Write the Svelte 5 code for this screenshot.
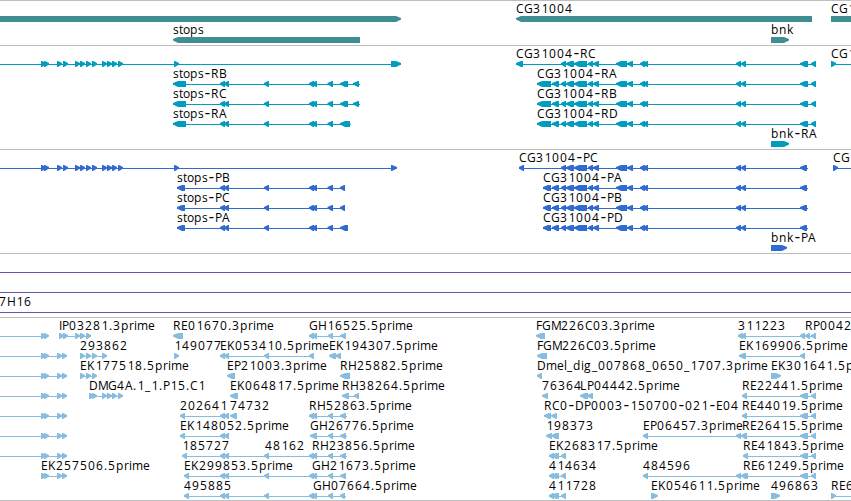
<script lang="ts">
    type Span = [number, number];
    type Feature = {
        row: number;
        label?: string;
        at?: number;
        line?: Span;
        dir?: 'left' | 'right';
        parts: Span[];
    };
    type Track = {
        name: string;
        height: number;
        pitch: number;
        features: Feature[];
    };

    // whole-pixel glyph advances, keeps the digits on an 8px grid
    const advances: Record<string, number> = {
        A: 8, B: 7, C: 8, D: 9, E: 7, F: 6, G: 9, H: 9, I: 3, K: 8, L: 7, M: 10, P: 7, R: 8,
        b: 8, d: 8, e: 7, g: 8, i: 3, k: 7, l: 3, m: 11, n: 8, o: 7, p: 8, r: 5, s: 6, t: 4,
        '.': 4, '_': 6, '-': 7
    };

    // narrow glyphs sit a little further right in their cell
    const bearings: Record<string, number> = { '1': 0.8, '-': 0.4 };

    function glyphs(label: string, start: number) {
        let x = start;
        return [...label].map((char) => {
            const at = x + (bearings[char] ?? 0);
            x += advances[char] ?? 8;
            return { char, at };
        });
    }

    // runs of plain characters, with each hyphen as a run of its own
    function runs(label: string, start: number) {
        const out: { text: string; x: number[]; dash: boolean }[] = [];
        for (const { char, at } of glyphs(label, start)) {
            const dash = char === '-';
            const last = out[out.length - 1];
            if (last && last.dash === dash) {
                last.text += char;
                last.x.push(at);
            } else {
                out.push({ text: char, x: [at], dash });
            }
        }
        return out;
    }

    function arrow([a, b]: Span, y: number, dir = 'left') {
        const head = Math.min(5, b - a - 1);
        const top = y - 1;
        const bottom = y + 0.6;
        if (dir === 'right') {
            return `M${a} ${y - 3}H${b - head}L${b} ${top}V${bottom}L${b - head} ${y + 3}H${a}Z`;
        }
        return `M${b} ${y - 3}H${a + head}L${a} ${top}V${bottom}L${a + head} ${y + 3}H${b}Z`;
    }

    const rowY = (track: Track, row: number) => 18 + row * track.pitch;

    const small = (...starts: number[]): Span[] => starts.map((s) => [s, s + 5]);

    const leadExons = small(41, 44, 57, 63, 75, 80, 86, 92, 102, 107, 112, 118, 174);
    const stopsExons: Span[] = [...small(220, 224, 264, 309, 312), [327.5, 333]];
    const cgExons: Span[] = [
        [561, 566], [566, 574], [574, 587], [588, 593], [593, 599], [616, 627],
        [627, 633], [640, 645], [643, 648], [736, 741], [741, 746]
    ];

    const genes: Feature[] = [
        { row: 0, dir: 'right', parts: [[-10, 401]] },
        { row: 0, label: 'CG31004', at: 516, parts: [[516, 812]] },
        { row: 0, label: 'CG1', at: 831, dir: 'right', parts: [[831, 870]] },
        { row: 1, label: 'stops', at: 173, parts: [[173, 360]] },
        { row: 1, label: 'bnk', at: 771, dir: 'right', parts: [[771, 789]] }
    ];

    const mrna: Feature[] = [
        { row: 0, line: [0, 401], dir: 'right', parts: [...leadExons, [391, 401]] },
        { row: 0, label: 'CG31004-RC', at: 516, line: [516, 816], parts: [[516, 523], ...cgExons, [800, 808], [811, 816]] },
        { row: 0, label: 'CG1', at: 831, line: [831, 851], dir: 'right', parts: [[831, 836]] },
        ...['stops-RB', 'stops-RC', 'stops-RA'].map((label, i): Feature => ({
            row: i + 1,
            label,
            at: 173,
            line: [173, i === 2 ? 351 : 360],
            parts: [[173, 186], ...stopsExons, ...(i === 2 ? [[340, 350]] : [[340, 348], [353, 359]]) as Span[]]
        })),
        ...['CG31004-RA', 'CG31004-RB', 'CG31004-RD'].map((label, i): Feature => ({
            row: i + 1,
            label,
            at: 537,
            line: [537, 816],
            parts: [[537, 551], [552, 559], ...cgExons, [800, 808], [811, 816]]
        })),
        { row: 4, label: 'bnk-RA', at: 771, dir: 'right', parts: [[771, 789]] }
    ];

    const cds: Feature[] = [
        { row: 0, line: [0, 397], dir: 'right', parts: [...leadExons, [391, 397]] },
        { row: 0, label: 'CG31004-PC', at: 519, line: [519, 808], parts: [[519, 524], ...cgExons, [800, 807]] },
        { row: 0, label: 'CG1', at: 833, line: [833, 851], dir: 'right', parts: [[833, 838]] },
        ...['stops-PB', 'stops-PC', 'stops-PA'].map((label, i): Feature => ({
            row: i + 1,
            label,
            at: 177,
            line: [177, i === 2 ? 348 : 345],
            parts: [[177, 185], ...stopsExons, [340, i === 2 ? 348 : 345]]
        })),
        ...['CG31004-PA', 'CG31004-PB', 'CG31004-PD'].map((label, i): Feature => ({
            row: i + 1,
            label,
            at: 543,
            line: [543, 808],
            parts: [[543, 551], [552, 559], ...cgExons, [800, 807]]
        })),
        { row: 4, label: 'bnk-PA', at: 771, dir: 'right', parts: [[771, 787]] }
    ];

    const bacs: Feature[] = [
        { row: 0, line: [0, 851], parts: [] },
        { row: 1, line: [0, 851], parts: [] },
        { row: 2, label: '7H16', at: -1, line: [0, 851], parts: [] }
    ];

    const ests: Feature[] = [
        { row: 0, line: [0, 48], dir: 'right', parts: small(41, 44) },
        ...[1, 2, 3, 4, 5, 6].map((row): Feature => ({
            row,
            line: [0, 67],
            dir: 'right',
            parts: small(41, 44, 57, 62)
        })),

        { row: 0, label: 'IP03281.3prime', at: 59, line: [59, 91], dir: 'right', parts: small(59, 63, 75, 80, 86) },
        { row: 0, label: 'RE01670.3prime', at: 173, parts: [[173, 183]] },
        { row: 0, label: 'GH16525.5prime', at: 309, line: [309, 346], parts: [...small(309, 312, 328), [340, 346]] },
        { row: 0, label: 'FGM226C03.3prime', at: 536, parts: [[536, 545]] },
        { row: 0, label: '311223', at: 738, line: [738, 805], parts: small(738, 741, 800) },
        { row: 0, label: 'RP0042', at: 805, line: [805, 816], parts: small(805, 811) },

        { row: 1, label: '293862', at: 80, line: [80, 107], dir: 'right', parts: small(80, 86, 92, 102) },
        { row: 1, label: '149077', at: 174, dir: 'right', parts: small(174) },
        { row: 1, label: 'EK053410.5prime', at: 220, line: [220, 314], parts: small(220, 224, 264, 309) },
        { row: 1, label: 'EK194307.5prime', at: 329, parts: [[329, 336], [335, 341]] },
        { row: 1, label: 'FGM226C03.5prime', at: 537, parts: [[537, 547]] },
        { row: 1, label: 'EK169906.5prime', at: 739, line: [739, 805], parts: [[739, 746], [800, 805]] },

        { row: 2, label: 'EK177518.5prime', at: 80, dir: 'right', line: [80, 96], parts: small(80, 86, 92) },
        { row: 2, label: 'EP21003.3prime', at: 227, parts: [[227, 235]] },
        { row: 2, label: 'RH25882.5prime', at: 340, parts: [[340, 350]] },
        { row: 2, label: 'Dmel_dig_007868_0650_1707.3prime', at: 537, parts: small(537) },
        { row: 2, label: 'EK301641.5prime', at: 771, dir: 'right', parts: [[771, 781]] },

        { row: 3, label: 'DMG4A.1_1.P15.C1', at: 89, line: [89, 123], dir: 'right', parts: small(89, 92, 102, 107, 112, 118) },
        { row: 3, label: 'EK064817.5prime', at: 230, parts: [[230, 238]] },
        { row: 3, label: 'RH38264.5prime', at: 342, line: [342, 359], parts: [[342, 349], [354, 359]] },
        { row: 3, label: '76364', at: 542, parts: [[542, 548]] },
        { row: 3, label: 'LP04442.5prime', at: 580, parts: [[580, 588], [587, 593]] },
        { row: 3, label: 'RE22441.5prime', at: 742, line: [742, 816], parts: [[742, 747], [800, 808], [811, 816]] },

        { row: 4, label: '202641', at: 180, line: [180, 229], parts: small(180, 220, 224) },
        { row: 4, label: '74732', at: 230, parts: [[230, 237]] },
        { row: 4, label: 'RH52863.5prime', at: 309, line: [309, 347], parts: [...small(309, 312, 328), [340, 346]] },
        { row: 4, label: 'RC0-DP0003-150700-021-E04', at: 544, parts: [[544, 551], [551, 557]] },
        { row: 4, label: 'RE44019.5prime', at: 742, line: [742, 816], parts: [[742, 747], [800, 808], [811, 816]] },

        { row: 5, label: 'EK148052.5prime', at: 180, line: [180, 229], parts: small(180, 220, 224) },
        { row: 5, label: 'GH26776.5prime', at: 310, line: [310, 347], parts: [[310, 317], [328, 333], [340, 346]] },
        { row: 5, label: '198373', at: 546, parts: [[546, 552], [551, 559]] },
        { row: 5, label: 'EP06457.3prime', at: 643, line: [643, 746], parts: small(643, 736, 741) },
        { row: 5, label: 'RE26415.5prime', at: 742, line: [742, 816], parts: [[742, 747], [800, 808], [811, 816]] },

        { row: 6, label: '185727', at: 182, line: [182, 264], parts: small(182, 220, 224) },
        { row: 6, label: '48162', at: 265, line: [264, 314], parts: small(264, 309) },
        { row: 6, label: 'RH23856.5prime', at: 312, line: [312, 347], parts: [...small(312, 328), [340, 346]] },
        { row: 6, label: 'EK268317.5prime', at: 549, line: [549, 566], parts: small(549, 552, 554, 561) },
        { row: 6, label: 'RE41843.5prime', at: 743, line: [743, 816], parts: [[743, 748], [800, 808], [811, 816]] },

        { row: 7, label: 'EK257506.5prime', at: 41, line: [41, 67], dir: 'right', parts: small(41, 44, 57, 62) },
        { row: 7, label: 'EK299853.5prime', at: 184, line: [184, 314], parts: small(184, 220, 224, 264, 309) },
        { row: 7, label: 'GH21673.5prime', at: 312, line: [312, 346], parts: [...small(312, 328), [340, 346]] },
        { row: 7, label: '414634', at: 549, line: [549, 566], parts: small(549, 552, 554, 561) },
        { row: 7, label: '484596', at: 643, line: [643, 746], parts: small(643, 736, 741) },
        { row: 7, label: 'RE61249.5prime', at: 743, line: [743, 816], parts: [[743, 748], [800, 808], [811, 816]] },

        { row: 8, label: '495885', at: 184, line: [184, 314], parts: small(184, 220, 224, 264, 309) },
        { row: 8, label: 'GH07664.5prime', at: 313, line: [312, 346], parts: small(312, 328, 340) },
        { row: 8, label: '411728', at: 549, line: [549, 566], parts: small(549, 552, 554, 561) },
        { row: 8, label: 'EK054611.5prime', at: 651, dir: 'right', parts: [[651, 658]] },
        { row: 8, label: '496863', at: 771, dir: 'right', parts: [[771, 780]] },
        { row: 8, label: 'RE6', at: 831, line: [831, 851], dir: 'right', parts: small(831) }
    ];

    const tracks: Track[] = [
        { name: 'gene', height: 44, pitch: 21, features: genes },
        { name: 'mrna', height: 103, pitch: 20, features: mrna },
        { name: 'cds', height: 103, pitch: 20, features: cds },
        { name: 'bac', height: 63, pitch: 20, features: bacs },
        { name: 'est', height: 182, pitch: 20, features: ests }
    ];
</script>

<main class="browser">
    {#each tracks as track}
        <section class="track {track.name}">
            <svg width="851" height={track.height}>
                {#each track.features as f}
                    {@const y = rowY(track, f.row)}
                    {#if f.line}
                        <rect x={f.line[0]} {y} width={f.line[1] - f.line[0]} height="1" />
                    {/if}
                    {#each f.parts as part}
                        <path d={arrow(part, y, f.dir)} />
                    {/each}
                {/each}
                {#each track.features as f}
                    {#if f.label}
                        <text y={rowY(track, f.row) - 6}>{#each runs(f.label, f.at ?? 0) as run}<tspan class:dash={run.dash} x={run.x.join(' ')}>{run.text}</tspan>{/each}</text>
                    {/if}
                {/each}
            </svg>
        </section>
    {/each}
</main>

<style>
    :global(body) {
        margin: 0;
        background: #fff;
    }

    .browser {
        display: flex;
        flex-direction: column;
        width: 851px;
        height: 501px;
        box-sizing: border-box;
        overflow: hidden;
        border-bottom: 1px solid #bebebe;
    }

    .track {
        border-top: 1px solid #bebebe;
    }

    svg {
        display: block;
        fill: currentColor;
    }

    text {
        font-family: "Open Sans", "Noto Sans", sans-serif;
        font-size: 12px;
        fill: #000;
    }

    .dash {
        font-family: "DejaVu Sans", sans-serif;
        font-size: 16px;
    }

    .gene {
        color: #3f8e94;
    }

    .mrna {
        color: #009dbf;
    }

    .cds {
        color: #306bd0;
    }

    .bac {
        color: #7450ad;
    }

    .est {
        color: #87bddf;
    }
</style>
